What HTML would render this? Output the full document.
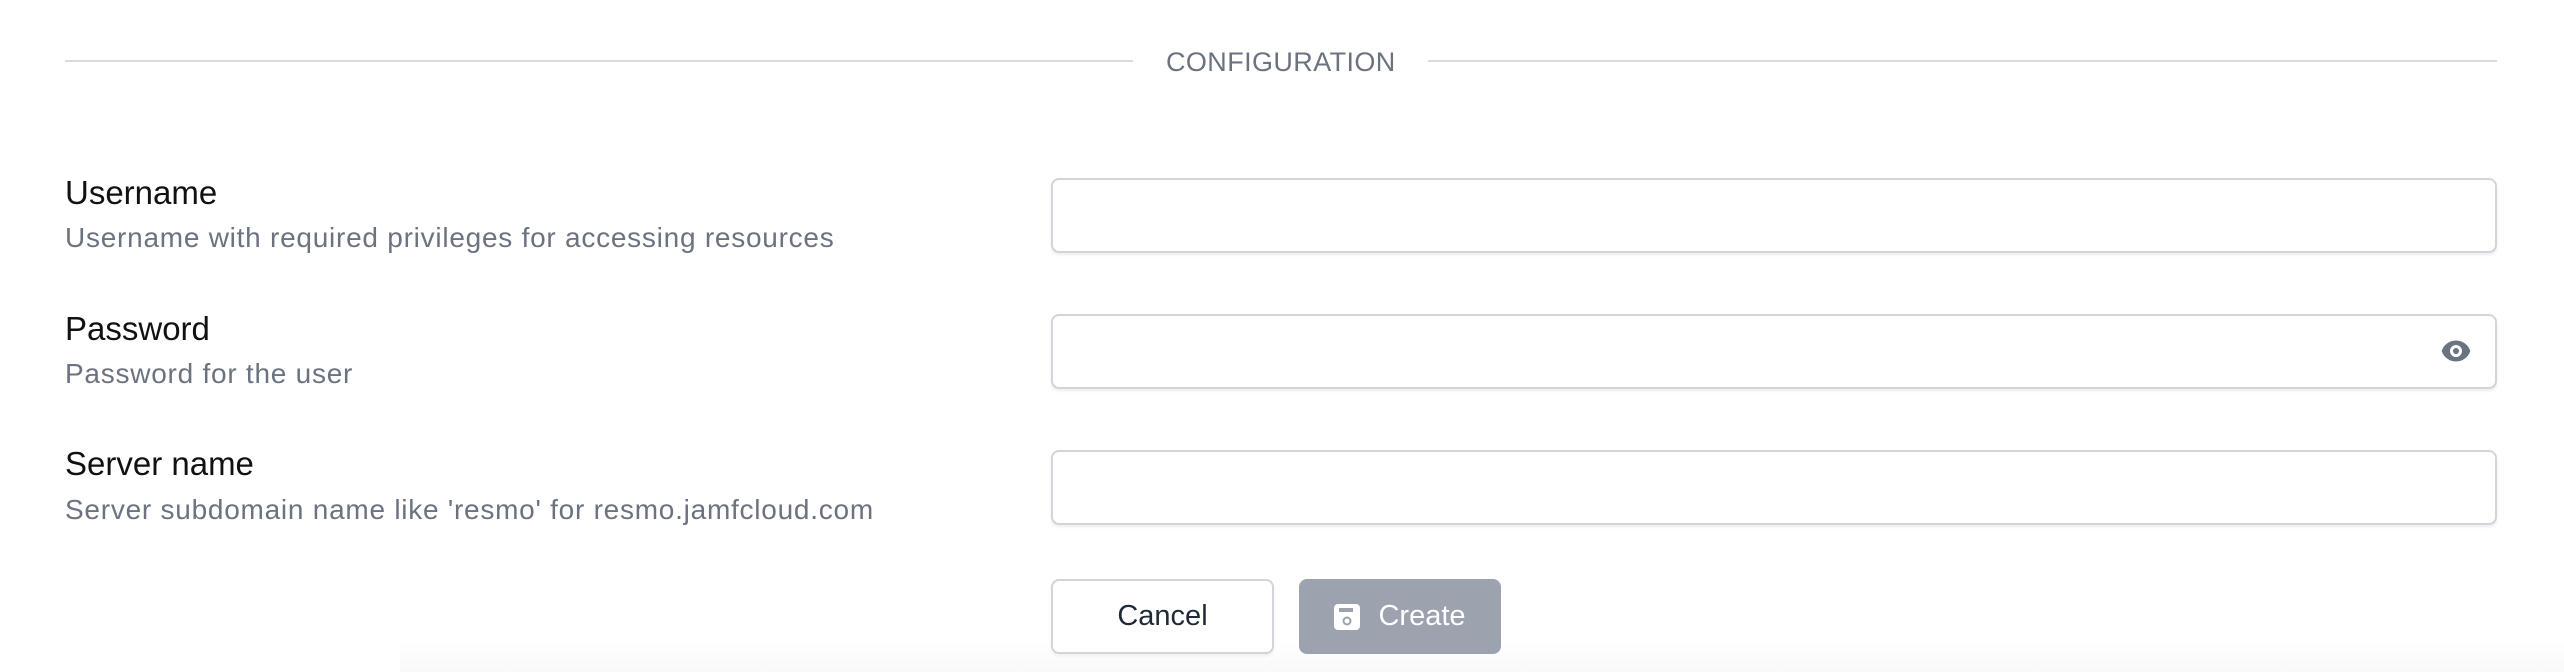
<!DOCTYPE html>
<html><head><style>
*{margin:0;padding:0;box-sizing:border-box}
body{width:2564px;height:672px;background:#fff;position:relative;overflow:hidden;font-family:"Liberation Sans",sans-serif}
.abs{position:absolute}
.line{position:absolute;height:2px;background:#d8dbe0;top:60px}
.title{position:absolute;top:47px;left:1166px;font-size:27px;color:#6b7280;letter-spacing:0.4px}
.lab{position:absolute;left:65px;font-size:33px;color:#111}
.desc{position:absolute;left:65px;font-size:28px;letter-spacing:0.75px;color:#6b7280}
.inp{position:absolute;left:1051px;width:1446px;height:75px;border:2px solid #d1d5db;border-radius:8px;box-shadow:0 2px 3px rgba(0,0,0,0.08);background:#fff}
.btn{position:absolute;top:579px;height:75px;border-radius:8px;font-size:29px;display:flex;align-items:center;justify-content:center}
.bot{position:absolute;left:400px;right:0;bottom:0;height:30px;background:linear-gradient(to bottom,rgba(240,241,243,0),rgba(242,243,245,0.5))}
</style></head><body>
<div class="bot"></div>
<div class="line" style="left:65px;width:1068px"></div>
<div class="title">CONFIGURATION</div>
<div class="line" style="left:1428px;width:1069px"></div>

<div class="lab" style="top:174px">Username</div>
<div class="desc" style="top:222px">Username with required privileges for accessing resources</div>
<div class="inp" style="top:178px"></div>

<div class="lab" style="top:310px">Password</div>
<div class="desc" style="top:358px">Password for the user</div>
<div class="inp" style="top:314px">
<svg class="abs" style="left:1387px;top:20px" width="32" height="30" viewBox="0 0 20 20"><path fill="#6b7280" d="M10 12a2 2 0 100-4 2 2 0 000 4z"/><path fill="#6b7280" fill-rule="evenodd" d="M.458 10C1.732 5.943 5.522 3 10 3s8.268 2.943 9.542 7c-1.274 4.057-5.064 7-9.542 7S1.732 14.057.458 10zM14 10a4 4 0 11-8 0 4 4 0 018 0z"/></svg>
</div>

<div class="lab" style="top:445px">Server name</div>
<div class="desc" style="top:494px">Server subdomain name like 'resmo' for resmo.jamfcloud.com</div>
<div class="inp" style="top:450px"></div>

<div class="btn" style="left:1051px;width:223px;border:2px solid #d1d5db;color:#1f2937;box-shadow:0 2px 3px rgba(0,0,0,0.06);background:#fff">Cancel</div>
<div class="btn" style="left:1299px;width:202px;background:#9ca3af;color:#fff">
<svg width="26" height="26" viewBox="0 0 26 26" style="margin-right:18px"><rect x="0" y="0" width="26" height="26" rx="4" fill="#fff"/><rect x="5" y="4" width="14" height="4" fill="#9ca3af"/><circle cx="13" cy="17" r="3.5" fill="none" stroke="#9ca3af" stroke-width="2"/></svg>Create</div>
</body></html>
